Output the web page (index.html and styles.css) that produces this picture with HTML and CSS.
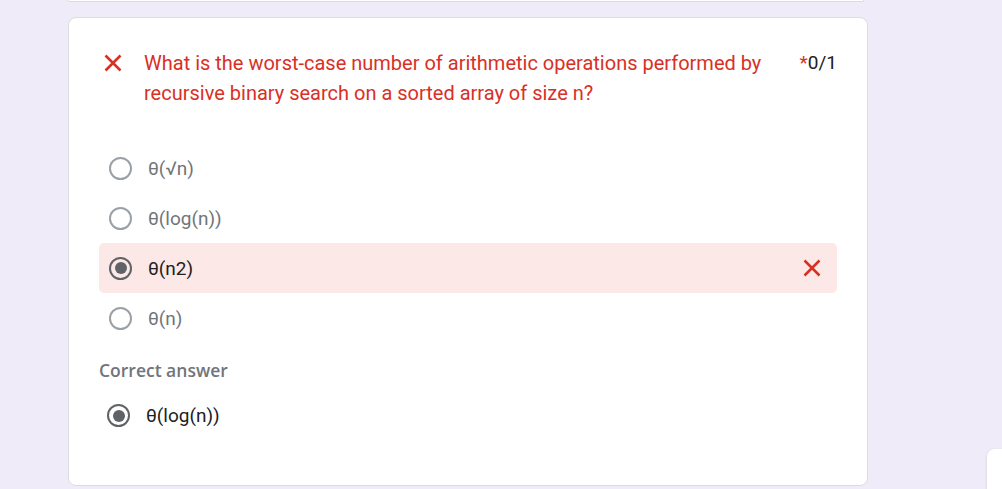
FILE: index.html
```html
<!DOCTYPE html>
<html>
<head>
<meta charset="utf-8">
<link rel="stylesheet" href="styles.css">
</head>
<body>
<div class="page">
  <div class="prev-card"></div>
  <div class="card">
    <div class="q-head">
      <svg class="q-icon" width="24" height="24" viewBox="0 0 24 24"><path d="M4.5 4.5 L19.5 19.5 M19.5 4.5 L4.5 19.5" stroke="#d93025" stroke-width="2.6" fill="none"/></svg>
      <div class="q-title">What is the worst-case number of arithmetic operations performed by recursive binary search on a sorted array of size n?</div>
      <div class="q-score"><span class="req">*</span>0/1</div>
    </div>
    <div class="options">
      <div class="opt"><span class="radio"></span><span class="opt-text">θ(√n)</span></div>
      <div class="opt"><span class="radio"></span><span class="opt-text">θ(log(n))</span></div>
      <div class="opt opt-wrong"><span class="radio radio-on"></span><span class="opt-text opt-sel">θ(n2)</span>
        <svg class="wrong-icon" width="24" height="24" viewBox="0 0 24 24"><path d="M4.5 4.5 L19.5 19.5 M19.5 4.5 L4.5 19.5" stroke="#d93025" stroke-width="2.6" fill="none"/></svg>
      </div>
      <div class="opt"><span class="radio"></span><span class="opt-text">θ(n)</span></div>
    </div>
    <div class="correct-label">Correct answer</div>
    <div class="correct-opt"><span class="radio radio-on"></span><span class="opt-text opt-sel">θ(log(n))</span></div>
  </div>
</div>
<div class="fab"></div>
</body>
</html>
```
FILE: styles.css
```css
html, body {
  margin: 0;
  padding: 0;
  background: #f0ebf8;
  height: 100%;
  overflow: hidden;
  font-family: Roboto, "Liberation Sans", Arial, sans-serif;
}
.page {
  padding-left: 68px;
}
.prev-card {
  width: 794px;
  height: 1px;
  background: #fff;
  border: 1px solid #dadce0;
  border-top: none;
  border-radius: 0 0 8px 8px;
}
.card {
  margin-top: 15px;
  width: 800px;
  height: 469px;
  box-sizing: border-box;
  background: #fff;
  border: 1px solid #dadce0;
  border-radius: 8px;
  padding: 30px 30px 0 30px;
}
.q-head {
  display: flex;
  align-items: flex-start;
}
.q-icon {
  flex: none;
  margin: 3px 0 0 2px;
}
.q-title {
  flex: 1;
  margin-left: 19px;
  font-size: 20px;
  line-height: 30px;
  color: #d93025;
}
.q-score {
  flex: none;
  margin-left: 36px;
  font-size: 19px;
  line-height: 30px;
  color: #202124;
}
.req { color: #d93025; }
.options {
  margin-top: 35px;
  display: flex;
  flex-direction: column;
}
.opt {
  height: 50px;
  display: flex;
  align-items: center;
  padding-left: 10px;
  border-radius: 5px;
}
.opt-wrong {
  background: #fce8e6;
}
.radio {
  flex: none;
  width: 23px;
  height: 23px;
  box-sizing: border-box;
  border: 2px solid #9aa0a6;
  border-radius: 50%;
  position: relative;
}
.radio-on {
  border-color: #5f6368;
}
.radio-on::after {
  content: "";
  position: absolute;
  left: 3.5px;
  top: 3.5px;
  width: 12px;
  height: 12px;
  border-radius: 50%;
  background: #5f6368;
}
.opt-text {
  margin-left: 16px;
  font-size: 19px;
  color: #70757a;
}
.opt-sel {
  color: #202124;
}
.wrong-icon {
  margin-left: auto;
  margin-right: 13px;
}
.correct-label {
  margin-top: 15px;
  font-family: "Open Sans", sans-serif;
  font-weight: 600;
  font-size: 17.5px;
  color: #70757a;
}
.correct-opt {
  margin-top: 22px;
  display: flex;
  align-items: center;
  padding-left: 8px;
}
.correct-opt .opt-text { margin-left: 16px; }
.fab {
  position: absolute;
  left: 987px;
  top: 449px;
  width: 60px;
  height: 60px;
  background: #fff;
  border-radius: 8px;
  box-shadow: 0 1px 3px rgba(0,0,0,0.12);
}
```
